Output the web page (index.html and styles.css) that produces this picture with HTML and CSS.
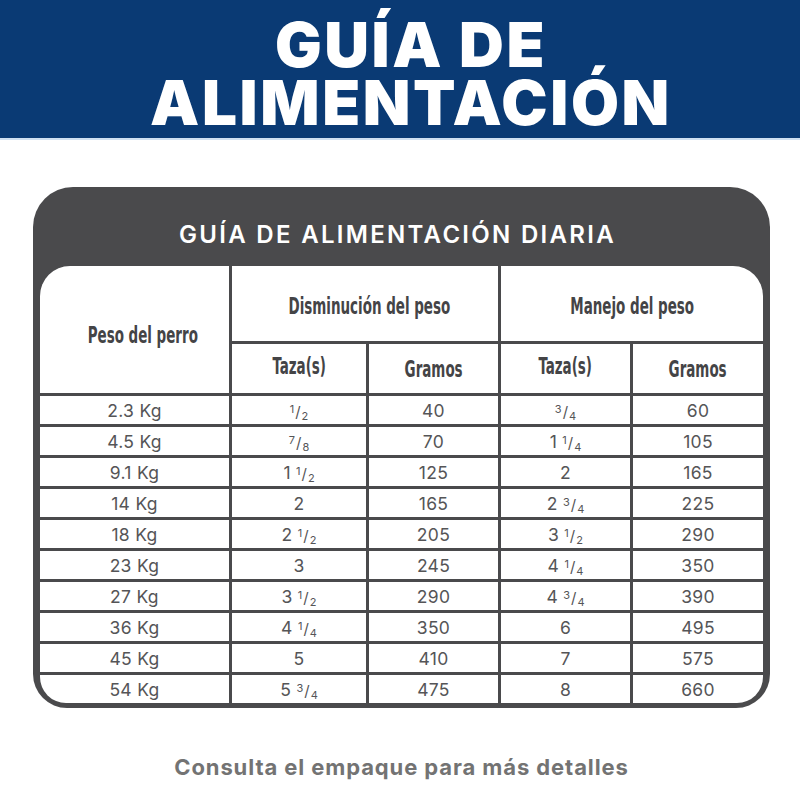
FILE: index.html
```html
<!DOCTYPE html>
<html lang="es">
<head>
<meta charset="utf-8">
<title>Guía de alimentación</title>
<link rel="stylesheet" href="styles.css">
</head>
<body>
<header class="banner">
  <h1 class="banner-title"><span class="line">GUÍA DE</span><span class="line">ALIMENTACIÓN</span></h1>
</header>
<main class="content">
  <section class="card">
    <h2 class="card-title">GUÍA DE ALIMENTACIÓN DIARIA</h2>
    <div class="grid">
      <div class="cell head head-weight"><span class="cond">Peso del perro</span></div>
      <div class="cell head head-group head-left"><span class="cond">Disminución del peso</span></div>
      <div class="cell head head-group head-right"><span class="cond">Manejo del peso</span></div>
      <div class="cell head sub"><span class="cond">Taza(s)</span></div>
      <div class="cell head sub low"><span class="cond">Gramos</span></div>
      <div class="cell head sub"><span class="cond">Taza(s)</span></div>
      <div class="cell head sub low"><span class="cond">Gramos</span></div>

      <div class="cell">2.3 Kg</div><div class="cell"><span class="fr"><span class="n">1</span>/<span class="d">2</span></span></div><div class="cell">40</div><div class="cell"><span class="fr"><span class="n">3</span>/<span class="d">4</span></span></div><div class="cell">60</div>
      <div class="cell">4.5 Kg</div><div class="cell"><span class="fr"><span class="n">7</span>/<span class="d">8</span></span></div><div class="cell">70</div><div class="cell">1 <span class="fr"><span class="n">1</span>/<span class="d">4</span></span></div><div class="cell">105</div>
      <div class="cell">9.1 Kg</div><div class="cell">1 <span class="fr"><span class="n">1</span>/<span class="d">2</span></span></div><div class="cell">125</div><div class="cell">2</div><div class="cell">165</div>
      <div class="cell">14 Kg</div><div class="cell">2</div><div class="cell">165</div><div class="cell">2 <span class="fr"><span class="n">3</span>/<span class="d">4</span></span></div><div class="cell">225</div>
      <div class="cell">18 Kg</div><div class="cell">2 <span class="fr"><span class="n">1</span>/<span class="d">2</span></span></div><div class="cell">205</div><div class="cell">3 <span class="fr"><span class="n">1</span>/<span class="d">2</span></span></div><div class="cell">290</div>
      <div class="cell">23 Kg</div><div class="cell">3</div><div class="cell">245</div><div class="cell">4 <span class="fr"><span class="n">1</span>/<span class="d">4</span></span></div><div class="cell">350</div>
      <div class="cell">27 Kg</div><div class="cell">3 <span class="fr"><span class="n">1</span>/<span class="d">2</span></span></div><div class="cell">290</div><div class="cell">4 <span class="fr"><span class="n">3</span>/<span class="d">4</span></span></div><div class="cell">390</div>
      <div class="cell">36 Kg</div><div class="cell">4 <span class="fr"><span class="n">1</span>/<span class="d">4</span></span></div><div class="cell">350</div><div class="cell">6</div><div class="cell">495</div>
      <div class="cell">45 Kg</div><div class="cell">5</div><div class="cell">410</div><div class="cell">7</div><div class="cell">575</div>
      <div class="cell bl">54 Kg</div><div class="cell">5 <span class="fr"><span class="n">3</span>/<span class="d">4</span></span></div><div class="cell">475</div><div class="cell">8</div><div class="cell br">660</div>
    </div>
  </section>
  <p class="note">Consulta el empaque para más detalles</p>
</main>
</body>
</html>
```
FILE: styles.css
```css
* { box-sizing: border-box; }

body {
  margin: 0;
  background: #ffffff;
  font-family: "Inter", "Liberation Sans", sans-serif;
}

.banner {
  height: 140px;
  background: #0a3a74;
  border-bottom: 2px solid #cfe0f2;
  display: flex;
  justify-content: center;
  padding: 14px 0 0 22px;
}

.banner-title {
  margin: 0;
  color: #ffffff;
  font-family: "Inter", "Liberation Sans", sans-serif;
  font-weight: 900;
  font-size: 62px;
  text-align: center;
  letter-spacing: 2.6px;
}

.banner-title .line {
  display: block;
  height: 58px;
  line-height: 62px;
}

.content {
  padding: 47px 30px 0 33px;
}

.card {
  width: 737px;
  background: #4a4a4c;
  border-radius: 40px 40px 34px 34px;
  padding: 0 7px 5px 7px;
}

.card-title {
  margin: 0;
  height: 79px;
  padding: 36px 8px 0 0;
  color: #ffffff;
  font-family: "Inter", "Liberation Sans", sans-serif;
  font-weight: 600;
  font-size: 24px;
  line-height: 24px;
  letter-spacing: 2.3px;
  text-align: center;
}

.grid {
  display: grid;
  grid-template-columns: 189px 134px 129px 129px 130px;
  grid-template-rows: 75px 49px repeat(10, 28px);
  gap: 3px;
  background: #4a4a4c;
  border-radius: 30px 30px 26px 26px;
}

.cell {
  background: #ffffff;
  text-align: center;
  line-height: 29px;
  color: #555557;
  font-family: "Inter", "Liberation Sans", sans-serif;
  font-size: 17.5px;
  font-weight: 400;
  letter-spacing: 0.3px;
  white-space: nowrap;
}

.head {
  display: flex;
  align-items: center;
  justify-content: center;
  line-height: 1.2;
  letter-spacing: 0;
  color: #444446;
  font-family: "DejaVu Sans Condensed", "DejaVu Sans", sans-serif;
  font-weight: 700;
  font-size: 23px;
}

.cond {
  display: inline-block;
  transform: scaleX(0.65);
}

.head-weight {
  grid-row: 1 / 3;
  border-top-left-radius: 30px;
  padding: 12px 0 0 16px;
}

.head-group {
  grid-column: span 2;
  padding-top: 6px;
}

.head-left {
  padding-left: 8px;
}

.head-right {
  border-top-right-radius: 30px;
}

.sub { padding-bottom: 4px; }
.sub.low { padding-bottom: 0; padding-top: 2px; }

.bl { border-bottom-left-radius: 26px; }
.br { border-bottom-right-radius: 26px; }

.fr {
  display: inline-block;
  font-size: 15px;
  letter-spacing: 0;
}

.fr .n {
  font-size: 11px;
  position: relative;
  top: -4px;
  margin-right: 1px;
}

.fr .d {
  font-size: 11px;
  position: relative;
  top: 3px;
  margin-left: 1px;
}

.note {
  margin: 46px 0 0 0;
  text-align: center;
  color: #737373;
  font-family: "Inter", "Liberation Sans", sans-serif;
  font-weight: 700;
  font-size: 22px;
  letter-spacing: 0.9px;
}
```
